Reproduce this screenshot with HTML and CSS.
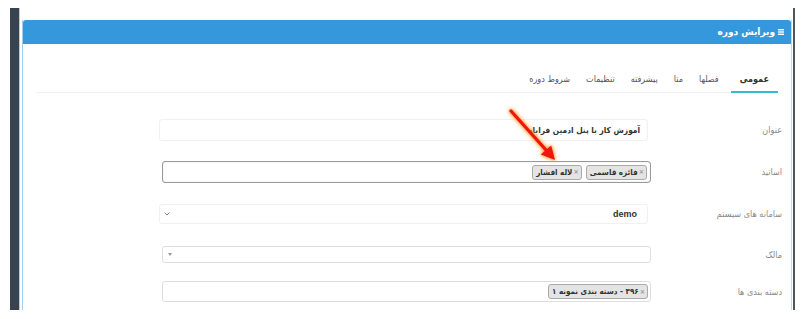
FILE: index.html
```html
<!DOCTYPE html>
<html lang="fa">
<head>
<meta charset="utf-8">
<title>ویرایش دوره</title>
<link rel="stylesheet" href="styles.css">
</head>
<body>
<div class="page">
  <div class="sidebar"></div>
  <div class="sep"></div>
  <div class="panel" dir="rtl">
    <div class="panel-head">
      <svg class="menu-icon" width="6" height="6" viewBox="0 0 6 6"><rect x="0" y="0" width="6" height="1.4" fill="#fff"/><rect x="0" y="2.3" width="6" height="1.4" fill="#fff"/><rect x="0" y="4.6" width="6" height="1.4" fill="#fff"/></svg>
      <span class="head-title">ویرایش دوره</span>
    </div>
    <div class="panel-body">
      <ul class="tabs">
        <li class="tab active">عمومی</li>
        <li class="tab">فصلها</li>
        <li class="tab">متا</li>
        <li class="tab">پیشرفته</li>
        <li class="tab">تنظیمات</li>
        <li class="tab">شروط دوره</li>
      </ul>
      <div class="form">
        <div class="row r1">
          <label class="lbl">عنوان</label>
          <div class="field faint inset"><span class="val">آموزش کار با پنل ادمین فراباد</span></div>
        </div>
        <div class="row r2">
          <label class="lbl">اساتید</label>
          <div class="field focused">
            <span class="tag"><span class="x">×</span>فائزه قاسمی</span>
            <span class="tag"><span class="x">×</span>لاله افشار</span>
          </div>
        </div>
        <div class="row r3">
          <label class="lbl">سامانه های سیستم</label>
          <div class="field faint inset"><span class="val latin">demo</span><span class="chev">
            <svg width="6" height="4" viewBox="0 0 6 4"><path d="M0.5 0.5 L3 3 L5.5 0.5" fill="none" stroke="#888" stroke-width="1"/></svg></span></div>
        </div>
        <div class="row r4">
          <label class="lbl">مالک</label>
          <div class="field plain"><span class="caret"></span></div>
        </div>
        <div class="row r5">
          <label class="lbl">دسته بندی ها</label>
          <div class="field plain">
            <span class="tag"><span class="x">×</span>۳۹۶ - دسته بندی نمونه ۱</span>
          </div>
        </div>
      </div>
    </div>
  </div>
  <div class="gap1"></div>
  <div class="rline"></div>
</div>
<svg class="arrow" width="805" height="319" viewBox="0 0 805 319">
  <line x1="511" y1="111" x2="546" y2="150" stroke="#f01510" stroke-width="3.2" stroke-linecap="round"/>
  <polygon points="555,160 540.8,154.6 551.2,145.4" fill="#f01510"/>
</svg>
</body>
</html>
```
FILE: styles.css
```css
* { box-sizing: border-box; }
html, body { margin: 0; padding: 0; background: #fff; }
body {
  font-family: "DejaVu Sans Condensed", "DejaVu Sans", sans-serif;
  font-stretch: condensed;
  width: 805px; height: 319px; overflow: hidden; position: relative;
}

.page {
  display: flex;
  margin: 8px 0 0 10px;
  height: 302px;
  width: 785px;
  overflow: hidden;
}
.sidebar { width: 9px; background: #37434f; flex: none; }
.sep { width: 1px; background: #c3c8cd; flex: none; margin-right: 2px; }
.panel {
  width: 770px;
  flex: none;
  margin-top: 12px;
  border-left: 1px solid #9fcdf0;
  border-right: 1px solid #b9dcf5;
  background: #fff;
}
.gap1 { width: 1px; flex: none; }
.rline { width: 2px; background: #4e5761; flex: none; }

.panel-head {
  height: 24px;
  background: #3698dc;
  border-radius: 3px 3px 0 0;
  display: flex;
  align-items: center;
  padding-right: 7px;
  color: #fff;
  gap: 3px;
}
.menu-icon { display: block; }
.head-title { font-size: 10px; font-weight: bold; line-height: 1; }

.panel-body { padding: 26px 13px 0 0; }

.tabs {
  list-style: none;
  margin: 0;
  padding: 0;
  display: flex;
  border-bottom: 1px solid #f0f0f0;
  width: 742px;
}
.tab {
  font-size: 9px;
  color: #555;
  height: 23px;
  line-height: 18px;
  padding: 0 7px;
  margin-left: 2px;
  border-bottom: 2px solid transparent;
  margin-bottom: -1px;
}
.tab.active {
  font-weight: bold;
  color: #333;
  border-bottom-color: #35bcd0;
  padding: 0 9px;
  margin-left: 5px;
}

.form { padding-top: 26px; margin-right: -4px; }
.row { display: flex; align-items: center; }
.lbl { width: 131px; flex: none; font-size: 9px; color: #8a8a8a; text-align: right; }
.field {
  width: 489px;
  border-radius: 3px;
  display: flex;
  align-items: center;
  padding: 0 4px;
  gap: 4px;
  position: relative;
}
.field.inset { margin-right: 3px; }
.field.faint { border: 1px solid #f1f1f1; }
.field.plain { border: 1px solid #dedede; }
.field.focused { border: 1px solid #9a9a9a; box-shadow: inset 0 0 1px #aaa; }
.val { font-size: 8.3px; font-weight: bold; color: #333; padding-right: 3px; }
.val.latin { font-family: "Liberation Sans", Arial, sans-serif; font-stretch: normal; font-size: 9px; }

.r1 .field { height: 22px; }
.r2 { margin-top: 20px; }
.r2 .field { height: 22px; padding: 0 3px; }
.r3 { margin-top: 21px; }
.r3 .field { height: 20px; justify-content: space-between; padding-right: 7px; }
.r4 { margin-top: 22px; }
.r4 .field { height: 17px; justify-content: flex-end; padding-left: 5px; }
.r5 { margin-top: 18px; }
.r5 .field { height: 21px; padding: 0 2px; }

.chev { display: flex; align-items: center; }
.caret {
  width: 0; height: 0;
  border-left: 2.5px solid transparent;
  border-right: 2.5px solid transparent;
  border-top: 3px solid #999;
}

.tag {
  display: inline-flex;
  align-items: center;
  height: 15px;
  background: #e4e4e4;
  border: 1px solid #aaa;
  border-radius: 3px;
  font-size: 8px;
  font-weight: bold;
  color: #333;
  padding: 0 2px 0 3px;
  white-space: nowrap;
}
.tag .x { color: #999; font-weight: bold; font-size: 7px; margin-left: 1px; }

.arrow {
  position: absolute;
  left: 0;
  top: 0;
  pointer-events: none;
  filter: drop-shadow(0 0 1.5px rgba(255, 140, 30, 1)) drop-shadow(0 0 2px rgba(255, 170, 60, 0.8));
}
```
